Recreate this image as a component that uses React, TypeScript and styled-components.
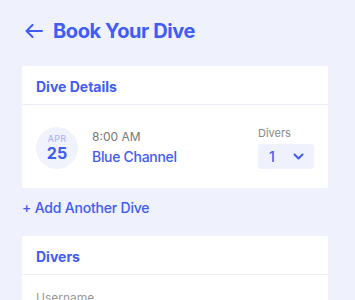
import React from 'react';
import styled, { createGlobalStyle } from 'styled-components';

const BLUE = '#3f5cf6';
const PAGE_BG = '#eff1fc';

const GlobalStyle = createGlobalStyle`
  body {
    margin: 0;
    background: ${PAGE_BG};
    font-family: Inter, "Noto Sans", Arial, sans-serif;
    -webkit-font-smoothing: antialiased;
  }
`;

const Page = styled.div`
  padding: 17px 27px 0 22px;
`;

const TopBar = styled.div`
  display: flex;
  align-items: center;
  gap: 10px;
  height: 28px;
  margin-bottom: 21px;
`;

const BackButton = styled.button`
  display: flex;
  align-items: center;
  justify-content: center;
  padding: 0;
  margin-left: 3px;
  border: none;
  background: none;
  color: ${BLUE};
  cursor: pointer;
`;

const PageTitle = styled.h1`
  margin: 0;
  font-size: 20px;
  line-height: 28px;
  font-weight: 700;
  color: ${BLUE};
  letter-spacing: -0.4px;
`;

const Card = styled.section`
  background: #fff;
`;

const CardHeader = styled.div`
  padding: 11px 14px 7px;
  border-bottom: 1.5px solid #eceefb;
`;

const CardTitle = styled.h2`
  margin: 0;
  font-size: 14px;
  line-height: 20px;
  font-weight: 700;
  color: ${BLUE};
`;

const DiveRow = styled.div`
  display: flex;
  align-items: center;
  padding: 21px 14px 19px;
`;

const DateBadge = styled.div`
  width: 42px;
  height: 42px;
  border-radius: 50%;
  background: #f0f2fc;
  display: flex;
  flex-direction: column;
  align-items: center;
  justify-content: center;
  flex-shrink: 0;
`;

const Month = styled.span`
  font-size: 9px;
  line-height: 11px;
  color: #a3affa;
  letter-spacing: 0.2px;
`;

const Day = styled.span`
  font-size: 16px;
  line-height: 19px;
  font-weight: 700;
  color: ${BLUE};
`;

const DiveInfo = styled.div`
  display: flex;
  flex-direction: column;
  gap: 3px;
  margin-left: 14px;
  flex: 1;
`;

const Time = styled.span`
  font-size: 12px;
  line-height: 16px;
  color: #777;
`;

const Site = styled.span`
  font-size: 14px;
  line-height: 18px;
  font-weight: 500;
  letter-spacing: -0.3px;
  color: ${BLUE};
`;

const DiversPicker = styled.div`
  display: flex;
  flex-direction: column;
  gap: 4px;
  width: 56px;
`;

const PickerLabel = styled.span`
  font-size: 11px;
  line-height: 14px;
  color: #888;
`;

const Select = styled.div`
  display: flex;
  align-items: center;
  justify-content: space-between;
  height: 25px;
  padding: 0 10px 0 11px;
  background: ${PAGE_BG};
  border-radius: 3px;
  color: ${BLUE};
  font-size: 14px;
  font-weight: 500;
`;

const AddLink = styled.button`
  display: block;
  margin: 10px 0 18px;
  padding: 0;
  border: none;
  background: none;
  font-family: inherit;
  font-size: 14px;
  line-height: 20px;
  font-weight: 500;
  letter-spacing: -0.2px;
  color: ${BLUE};
  cursor: pointer;
`;

const FieldLabel = styled.div`
  padding: 15px 14px 0;
  font-size: 12px;
  line-height: 16px;
  color: #999;
`;

const App: React.FC = () => {
  return (
    <>
      <GlobalStyle />
      <Page>
        <TopBar>
          <BackButton aria-label="Back">
            <svg width="18" height="14" viewBox="0 0 18 14" fill="none">
              <path
                d="M17 7H1.5M7.5 1L1.5 7l6 6"
                stroke="currentColor"
                strokeWidth="2"
                strokeLinecap="round"
                strokeLinejoin="round"
              />
            </svg>
          </BackButton>
          <PageTitle>Book Your Dive</PageTitle>
        </TopBar>

        <Card>
          <CardHeader>
            <CardTitle>Dive Details</CardTitle>
          </CardHeader>
          <DiveRow>
            <DateBadge>
              <Month>APR</Month>
              <Day>25</Day>
            </DateBadge>
            <DiveInfo>
              <Time>8:00 AM</Time>
              <Site>Blue Channel</Site>
            </DiveInfo>
            <DiversPicker>
              <PickerLabel>Divers</PickerLabel>
              <Select>
                <span>1</span>
                <svg width="11" height="7" viewBox="0 0 11 7" fill="none">
                  <path
                    d="M1.5 1.5l4 4 4-4"
                    stroke="currentColor"
                    strokeWidth="2"
                    strokeLinecap="round"
                    strokeLinejoin="round"
                  />
                </svg>
              </Select>
            </DiversPicker>
          </DiveRow>
        </Card>

        <AddLink>+ Add Another Dive</AddLink>

        <Card>
          <CardHeader>
            <CardTitle>Divers</CardTitle>
          </CardHeader>
          <FieldLabel>Username</FieldLabel>
        </Card>
      </Page>
    </>
  );
};

export default App;
